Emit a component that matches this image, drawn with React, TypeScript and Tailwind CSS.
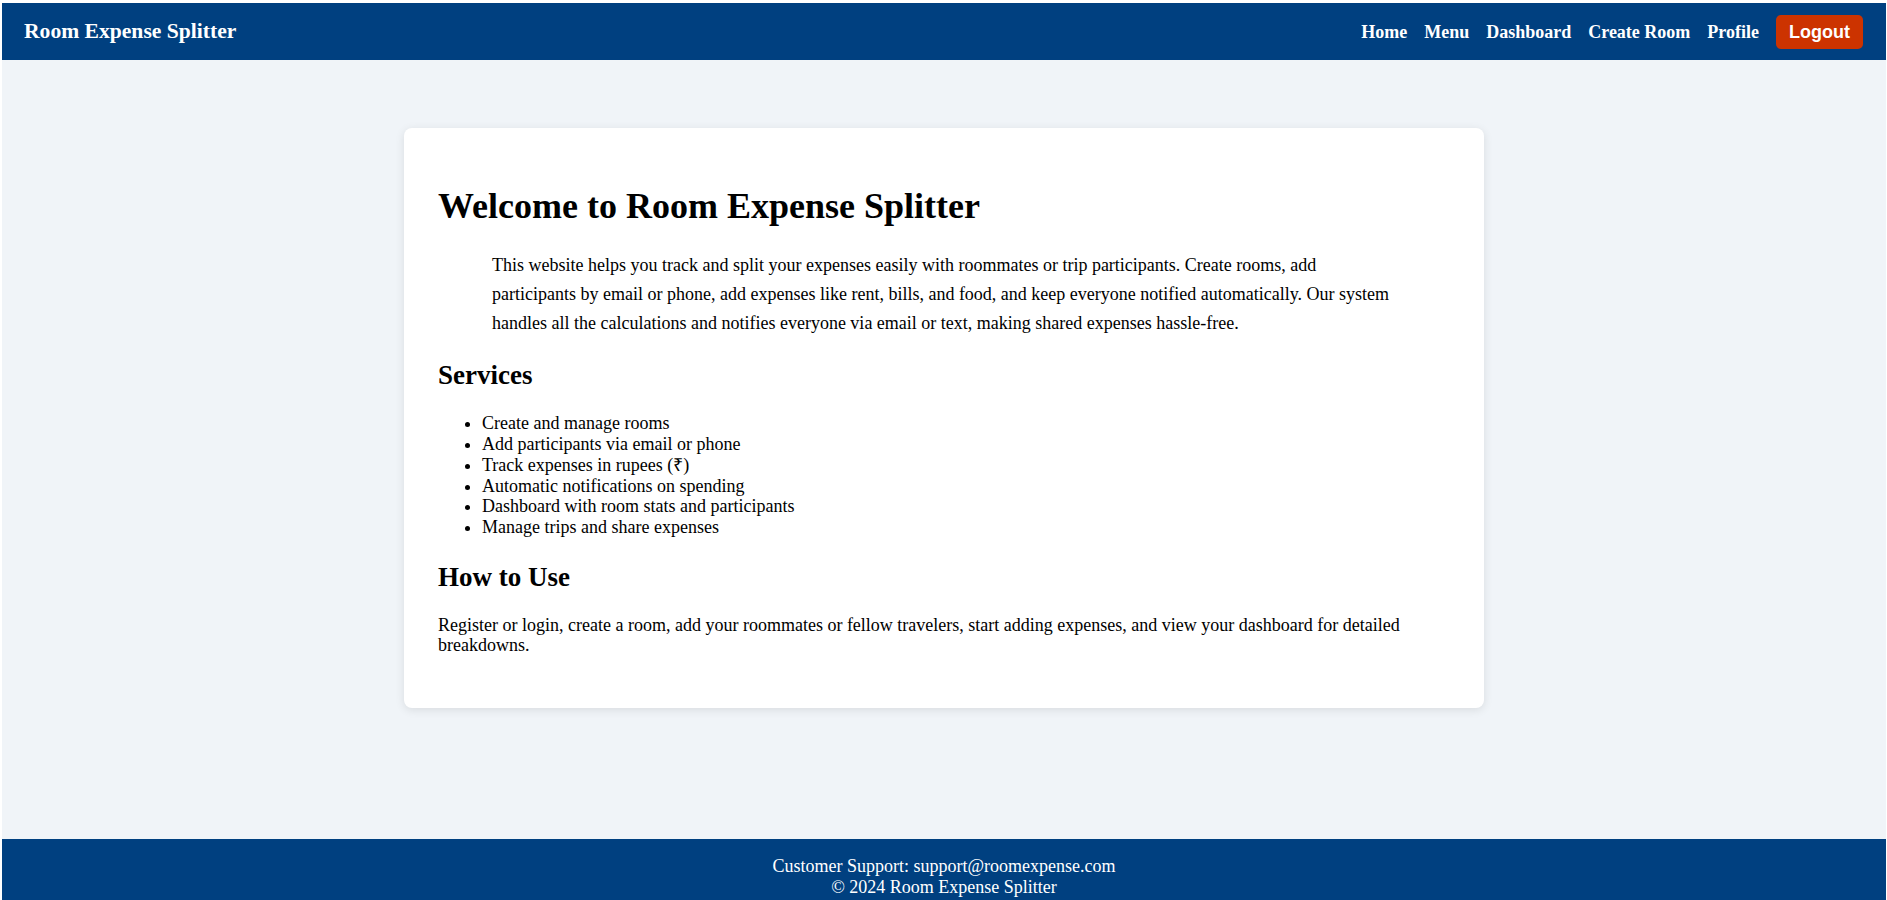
import React from "react";

export default function App() {
  const services = [
    "Create and manage rooms",
    "Add participants via email or phone",
    "Track expenses in rupees (₹)",
    "Automatic notifications on spending",
    "Dashboard with room stats and participants",
    "Manage trips and share expenses",
  ];
  const links = ["Home", "Menu", "Dashboard", "Create Room", "Profile"];
  return (
    <div className="bg-white border-t-[3px] border-l-[2px] border-r-[1px] border-white font-['Liberation_Serif','Times_New_Roman',serif] text-black">
      <header className="h-[57px] bg-[#004080] flex items-center justify-between pl-[22px] pr-[23px]">
        <div className="text-[21.6px] font-bold text-white leading-none">Room Expense Splitter</div>
        <nav className="flex items-center gap-[17px]">
          {links.map((l) => (
            <a key={l} className="text-[18px] font-bold text-white leading-none cursor-pointer">
              {l}
            </a>
          ))}
          <button className="h-[34px] px-[13px] rounded-[5px] bg-[#cc3300] text-white text-[18px] font-bold font-['Liberation_Sans',Arial,sans-serif] leading-none">
            Logout
          </button>
        </nav>
      </header>
      <main className="h-[779px] bg-[#f0f4f8] pt-[68px]">
        <div className="w-[1080px] mx-auto bg-white rounded-[8px] shadow-[0_2px_10px_rgba(0,0,0,0.1)] px-[34px] py-[34px] text-[18px]">
          <h1 className="text-[36px] font-bold leading-[1.15] mt-[24px] mb-[24px]">Welcome to Room Expense Splitter</h1>
          <p className="px-[54px] leading-[29px]">
            This website helps you track and split your expenses easily with roommates or trip participants. Create rooms, add participants by email or phone, add expenses like rent, bills, and food, and keep everyone notified automatically. Our system handles all the calculations and notifies everyone via email or text, making shared expenses hassle-free.
          </p>
          <h2 className="text-[27px] font-bold leading-[1.15] mt-[22px] mb-[22px]">Services</h2>
          <ul className="list-disc pl-[44px] leading-[1.15]">
            {services.map((s) => (
              <li key={s}>{s}</li>
            ))}
          </ul>
          <h2 className="text-[27px] font-bold leading-[1.15] mt-[24px] mb-[22px]">How to Use</h2>
          <p className="leading-[1.15] mb-[18px]">
            Register or login, create a room, add your roommates or fellow travelers, start adding expenses, and view your dashboard for detailed breakdowns.
          </p>
        </div>
      </main>
      <footer className="bg-[#004080] text-white text-center text-[18px] leading-[1.15] pt-[17px] pb-[18px]">
        <div>Customer Support: support@roomexpense.com</div>
        <div>© 2024 Room Expense Splitter</div>
      </footer>
    </div>
  );
}
